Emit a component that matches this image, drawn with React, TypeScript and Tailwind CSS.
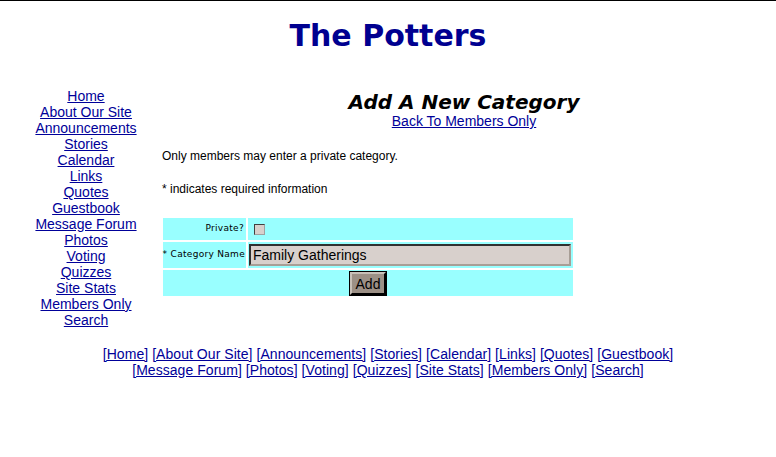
import { FC } from 'react';

const navLinks = [
  'Home',
  'About Our Site',
  'Announcements',
  'Stories',
  'Calendar',
  'Links',
  'Quotes',
  'Guestbook',
  'Message Forum',
  'Photos',
  'Voting',
  'Quizzes',
  'Site Stats',
  'Members Only',
  'Search',
];

const footerRow1 = ['Home', 'About Our Site', 'Announcements', 'Stories', 'Calendar', 'Links', 'Quotes', 'Guestbook'];
const footerRow2 = ['Message Forum', 'Photos', 'Voting', 'Quizzes', 'Site Stats', 'Members Only', 'Search'];

const FooterRow: FC<{ items: string[] }> = ({ items }) => (
  <div className="text-center">
    {items.map((item, i) => (
      <span key={item}>
        {i > 0 && ' '}
        <a href="#" className="text-[#000099] underline">[{item}]</a>
      </span>
    ))}
  </div>
);

const App: FC = () => {
  return (
    <div className="w-[776px] h-[457px] bg-white border-t border-black font-['Liberation_Sans',Arial,sans-serif] text-black overflow-hidden">
      <h1 className="text-center pt-[17px] text-[30px] leading-[36px] font-bold text-[#000090] font-['DejaVu_Sans',Verdana,sans-serif]">
        The Potters
      </h1>

      <div className="flex mt-[34px]">
        <nav className="w-[172px] flex flex-col items-center text-[14px] leading-[16px]">
          {navLinks.map((link) => (
            <a key={link} href="#" className="text-[#000099] underline">{link}</a>
          ))}
        </nav>

        <main className="w-[584px]">
          <div className="flex flex-col items-center">
            <h2 className="text-[20px] leading-[22px] font-bold italic font-['DejaVu_Sans',Verdana,sans-serif] mt-[3px]">
              Add A New Category
            </h2>
            <a href="#" className="text-[14px] leading-[16px] text-[#000099] underline">Back To Members Only</a>
          </div>

          <p className="text-[12px] leading-[14px] mt-[20px] -ml-[10px]">Only members may enter a private category.</p>
          <p className="text-[12px] leading-[14px] mt-[19px] -ml-[10px]">* indicates required information</p>

          <div className="mt-[22px] -ml-[9px] w-[410px] flex flex-col gap-[2px] text-[9px] font-['DejaVu_Sans',Verdana,sans-serif] tracking-[0.3px]">
            <div className="flex gap-[2px] h-[22px]">
              <div className="w-[83px] bg-[#99ffff] flex items-center justify-end pr-[2px]">Private?</div>
              <div className="flex-1 bg-[#99ffff] flex items-center pl-[6px]">
                <span className="w-[11px] h-[11px] bg-[#d8d0cc] border border-t-[#404040] border-l-[#404040] border-b-[#a0a0a0] border-r-[#a0a0a0]" />
              </div>
            </div>
            <div className="flex gap-[2px] h-[26px]">
              <div className="w-[83px] bg-[#99ffff] flex items-center justify-end pr-[1px] whitespace-nowrap">* Category Name</div>
              <div className="flex-1 bg-[#99ffff] flex items-center pl-[1px] pr-[2px]">
                <div className="w-full h-[22px] bg-[#d8d0cc] border-2 border-t-[#303030] border-l-[#303030] border-b-[#a89e96] border-r-[#a89e96] flex items-center pl-[2px] text-[14px] font-['Liberation_Sans',Arial,sans-serif] tracking-normal">
                  Family Gatherings
                </div>
              </div>
            </div>
            <div className="h-[26px] bg-[#99ffff] flex items-center justify-center">
              <button className="w-[36px] h-[23px] bg-[#9c9086] border-2 border-t-[#c8c0b8] border-l-[#c8c0b8] border-b-black border-r-black outline outline-1 outline-black text-[14px] font-['Liberation_Sans',Arial,sans-serif] tracking-normal">
                Add
              </button>
            </div>
          </div>
        </main>
      </div>

      <div className="mt-[18px] text-[14px] leading-[16px] tracking-[0.05px]">
        <FooterRow items={footerRow1} />
        <FooterRow items={footerRow2} />
      </div>
    </div>
  );
};

export default App;
